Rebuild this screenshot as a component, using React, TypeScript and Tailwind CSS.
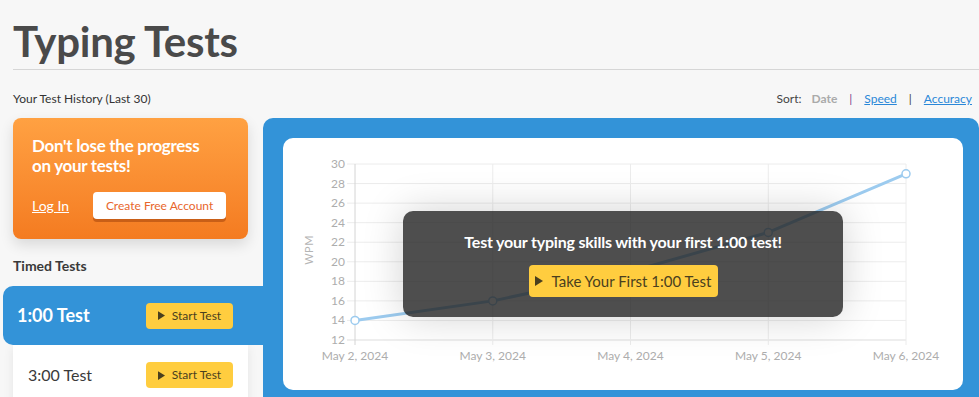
import React from 'react';

const PlayIcon: React.FC<{ size?: number }> = ({ size = 8 }) => (
    <svg width={size} height={size + 2} viewBox="0 0 8 10" className="shrink-0">
        <path d="M0 0 L8 5 L0 10 Z" fill="currentColor" />
    </svg>
);

const StartButton: React.FC = () => (
    <button className="flex items-center gap-[7px] w-[87px] h-[26px] justify-center rounded-[4px] bg-[#ffcd3f] text-[#4a3f1e] text-[12px]">
        <PlayIcon size={7} />
        Start Test
    </button>
);

const dates = ['May 2, 2024', 'May 3, 2024', 'May 4, 2024', 'May 5, 2024', 'May 6, 2024'];
const values = [14, 16, 19, 23, 29];

const Chart: React.FC = () => {
    const x0 = 72;
    const x1 = 623;
    const yTop = 26;
    const yBot = 202;
    const sx = (i: number) => x0 + ((x1 - x0) / 4) * i;
    const sy = (v: number) => yBot - ((v - 12) / 18) * (yBot - yTop);
    const ticks = [12, 14, 16, 18, 20, 22, 24, 26, 28, 30];
    const pts = values.map((v, i) => `${sx(i)},${sy(v)}`).join(' ');

    return (
        <svg width="680" height="252" className="block">
            {ticks.map((t) => (
                <g key={t}>
                    <line x1={64} x2={x1} y1={sy(t)} y2={sy(t)} stroke={t === 12 ? '#dddddd' : '#ececec'} strokeWidth="1" />
                    <text x={62} y={sy(t) + 4} textAnchor="end" fontSize="12" fill="#adadad" fontFamily="Lato, sans-serif">
                        {t}
                    </text>
                </g>
            ))}
            {dates.map((d, i) => (
                <g key={d}>
                    <line x1={sx(i)} x2={sx(i)} y1={yTop} y2={yBot + 5} stroke={i === 0 ? '#d4d4d4' : '#ececec'} strokeWidth="1" />
                    <text x={sx(i)} y={222} textAnchor="middle" fontSize="12" fill="#adadad" fontFamily="Lato, sans-serif">
                        {d}
                    </text>
                </g>
            ))}
            <text
                x={30}
                y={112}
                transform="rotate(-90 30 112)"
                textAnchor="middle"
                fontSize="11"
                fill="#b5b5b5"
                fontFamily="Lato, sans-serif"
                letterSpacing="0.5"
            >
                WPM
            </text>
            <polyline points={pts} fill="none" stroke="#9ccbef" strokeWidth="3" strokeLinejoin="round" />
            {values.map((v, i) => (
                <circle key={i} cx={sx(i)} cy={sy(v)} r="4" fill="#ffffff" stroke="#9ccbef" strokeWidth="1.5" />
            ))}
        </svg>
    );
};

const App: React.FC = () => {
    return (
        <div className="h-[397px] overflow-hidden bg-[#f7f7f7] font-['Lato',sans-serif] text-[#333]">
            <div className="pl-[13px]">
                {/* Header */}
                <h1 className="pt-[19px] pb-[6px] text-[42px] leading-[44px] font-bold text-[#4a4a4a] tracking-[-0.3px] border-b border-[#d6d6d6]">
                    Typing Tests
                </h1>

                <div className="mt-[20px] flex items-center justify-between h-[18px] pr-[7px] text-[12px]">
                    <span className="text-[#333]">Your Test History (Last 30)</span>
                    <div className="flex items-center gap-[10px]">
                        <span className="text-[#444]">Sort:</span>
                        <span className="font-bold text-[#aaaaaa]">Date</span>
                        <span className="text-[#7a3d8a] px-[2px]">|</span>
                        <span className="text-[#2a87d8] underline">Speed</span>
                        <span className="text-[#444] px-[2px]">|</span>
                        <span className="text-[#2a87d8] underline">Accuracy</span>
                    </div>
                </div>

                <div className="mt-[10px] flex gap-[15px]">
                    {/* Left column */}
                    <div className="w-[235px] shrink-0">
                        <div className="h-[121px] rounded-[8px] bg-gradient-to-b from-[#ffa142] to-[#f47b20] pt-[18px] px-[19px] shadow-[0_6px_14px_rgba(0,0,0,0.12)]">
                            <p className="text-white font-bold text-[17px] leading-[20px] tracking-[-0.3px]">
                                Don't lose the progress
                                <br />
                                on your tests!
                            </p>
                            <div className="mt-[16px] flex items-center gap-[24px]">
                                <span className="text-white text-[14px] underline">Log In</span>
                                <button className="w-[133px] h-[27px] rounded-[4px] bg-white text-[#e8662c] text-[12px] shadow-[0_3px_0_#c95f17]">
                                    Create Free Account
                                </button>
                            </div>
                        </div>

                        <h2 className="mt-[17px] text-[14px] leading-[20px] font-bold text-[#3a3a3a]">Timed Tests</h2>

                        <div className="mt-[10px] ml-[-10px] mr-[-15px] h-[59px] rounded-l-[10px] bg-[#3393d8] flex items-center justify-between pl-[14px] pr-[30px] relative">
                            <span className="text-white font-bold text-[18px]">1:00 Test</span>
                            <StartButton />
                        </div>
                        <div className="h-[60px] bg-white flex items-center justify-between pl-[15px] pr-[15px] shadow-[0_2px_10px_rgba(0,0,0,0.08)]">
                            <span className="text-[#3a3a3a] text-[16px]">3:00 Test</span>
                            <StartButton />
                        </div>
                    </div>

                    {/* Right panel */}
                    <div className="flex-1 rounded-t-[10px] bg-[#3393d8] pl-[20px] pr-[16px] pt-[20px] h-[290px]">
                        <div className="relative h-[252px] rounded-[10px] bg-white">
                            <Chart />
                            <div className="absolute left-1/2 top-1/2 -translate-x-1/2 -translate-y-1/2 w-[440px] h-[106px] rounded-[10px] bg-[#222222]/[0.8] shadow-[0_0_40px_rgba(0,0,0,0.18)] flex flex-col items-center">
                                <p className="mt-[21px] text-white font-bold text-[16px] leading-[20px] tracking-[-0.2px]">
                                    Test your typing skills with your first 1:00 test!
                                </p>
                                <button className="mt-[13px] w-[189px] h-[32px] rounded-[4px] bg-[#ffcd3f] text-[#4a3f1e] text-[15px] flex items-center justify-center gap-[9px]">
                                    <PlayIcon size={8} />
                                    Take Your First 1:00 Test
                                </button>
                            </div>
                        </div>
                    </div>
                </div>
            </div>
        </div>
    );
};

export default App;
